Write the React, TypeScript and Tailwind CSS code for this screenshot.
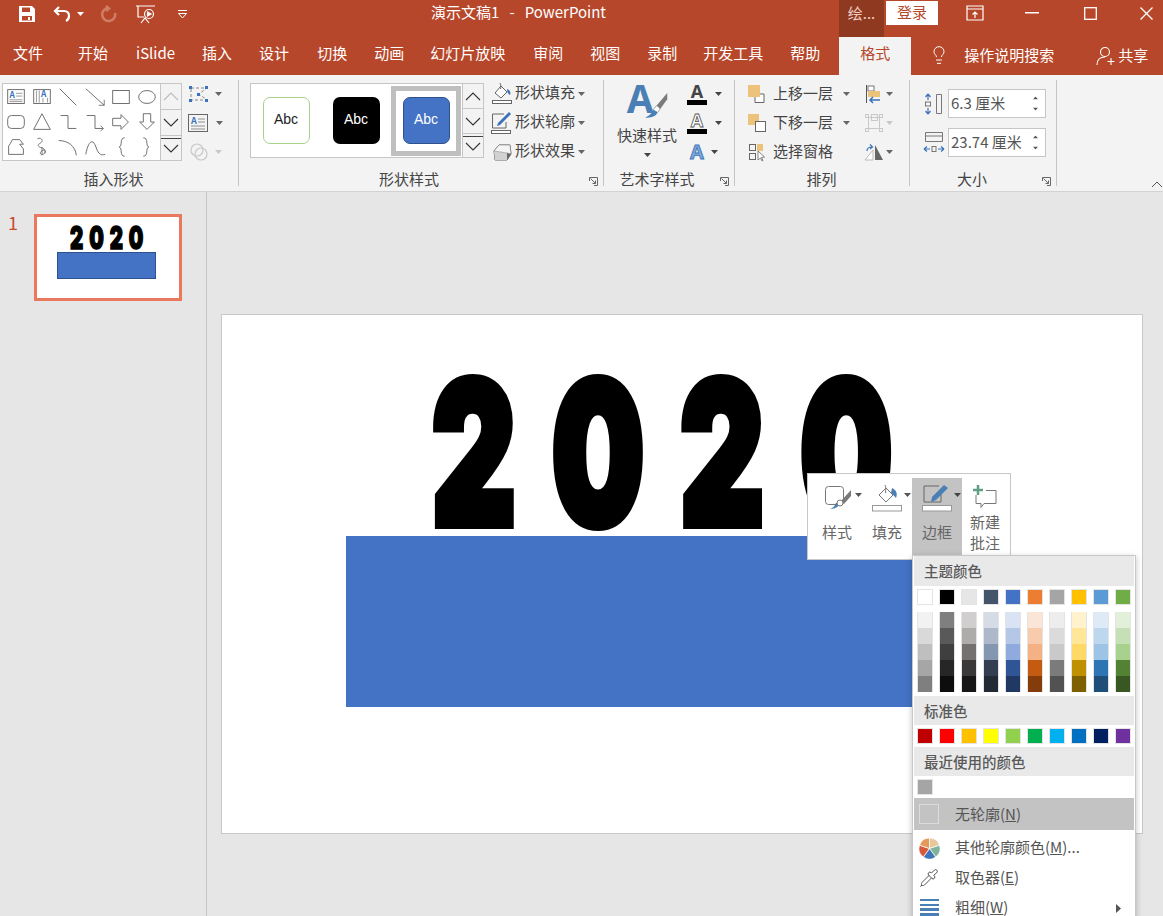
import type { ReactNode } from "react";
import { Lightbulb, Pipette } from "lucide-react";

const Caret = ({ className = "text-[#666]" }: { className?: string }) => (
  <svg width="7" height="4" viewBox="0 0 7 4" className={`shrink-0 ${className}`}>
    <path d="M0 0h7L3.5 4z" fill="currentColor" />
  </svg>
);

const Chevron = ({ up = false, muted = false }: { up?: boolean; muted?: boolean }) => (
  <svg width="16" height="9" viewBox="0 0 16 9" fill="none" stroke={muted ? "#bbb" : "#333"} strokeWidth="1.1">
    <path d={up ? "M1 8l7-7 7 7" : "M1 1l7 7 7-7"} />
  </svg>
);

const Launcher = ({ className }: { className: string }) => (
  <svg width="9" height="9" viewBox="0 0 9 9" fill="none" stroke="#666" className={`absolute ${className}`}>
    <path d="M.5 4V.5H8.500V8.500H5" />
    <path d="M1.500 1.500l5 5M6.500 3.500v3h-3" />
  </svg>
);

const Scroller = ({ first, muted }: { first: string; muted?: boolean }) => (
  <div className="flex w-[21px] flex-col border-l border-[#c6c6c6] bg-[#f3f3f3]">
    <div className={`flex items-center justify-center border-b border-[#c6c6c6] ${first}`}>
      <Chevron up muted={muted} />
    </div>
    <div className={`flex items-center justify-center border-b border-[#c6c6c6] ${first}`}>
      <Chevron />
    </div>
    <div className="flex flex-1 flex-col items-center gap-[5px] pt-[2px]">
      <div className="h-px w-full bg-[#444]" />
      <Chevron />
    </div>
  </div>
);

const shapePaths: ReactNode[] = [
  <g key="a"><rect x="4" y="5" width="18" height="15" /><text x="6" y="14" fontSize="9" fontWeight="700" fill="#3b73b9" stroke="none">A</text><path d="M13 9h7M13 12h7M6 16h14M6 18h14" strokeWidth=".7" /></g>,
  <g key="b"><rect x="4" y="5" width="18" height="15" /><path d="M7 6v13M10 6v13M19 14v5M14 14v5" strokeWidth=".7" /><text x="12" y="13" fontSize="9" fontWeight="700" fill="#3b73b9" stroke="none">A</text></g>,
  <path key="c" d="M4 4l18 18" />,
  <g key="d"><path d="M3 4l20 18" /><path d="M23 16v6h-6" strokeWidth=".9" /></g>,
  <rect key="e" x="4" y="6" width="18" height="14" />,
  <ellipse key="f" cx="13" cy="13" rx="9" ry="7" />,
  <rect key="g" x="4" y="6" width="18" height="14" rx="4" />,
  <path key="h" d="M13 4l9 17H4z" />,
  <path key="i" d="M5 6h8v14h9" />,
  <g key="j"><path d="M4 6h9v14h9" /><path d="M19 17l3 3-3 3" strokeWidth=".9" /></g>,
  <path key="k" d="M4 9h9V5l8 8-8 8v-4H4z" />,
  <path key="l" d="M9 4h8v9h4l-8 8-8-8h4z" />,
  <path key="m" d="M9 5h8l4 5h-4l4 5v6H5v-9l2-3z" />,
  <path key="n" d="M8 4c5-2 7 3 3 5s-2 4 2 5 4 6 1 7-4-2-1-4 5 0 3 3M13 13v9" strokeWidth=".9" />,
  <path key="o" d="M3 6c10 0 18 6 19 16" />,
  <path key="p" d="M3 21c3-16 8-17 11-8s6 9 10 8" />,
  <path key="q" d="M17 3c-6 0-2 9-6 10 4 1 0 10 6 10" />,
  <path key="r" d="M9 3c6 0 2 9 6 10-4 1 0 10-6 10" />,
];

const ShapeGallery = () => (
  <div className="flex h-[78px] w-[180px] border border-[#c6c6c6] bg-white">
    <div className="grid w-[158px] grid-cols-6 grid-rows-3">
      {shapePaths.map((p, i) => (
        <div key={i} className="flex items-center justify-center">
          <svg width="24" height="24" viewBox="0 0 26 26" fill="none" stroke="#666" strokeWidth="1">
            {p}
          </svg>
        </div>
      ))}
    </div>
    <Scroller first="h-[26px]" muted />
  </div>
);

const StyleGallery = () => (
  <div className="flex h-[75px] w-[234px] border border-[#c6c6c6] bg-white">
    <div className="flex w-[212px] items-center font-['Liberation_Sans',sans-serif] text-[14px]">
      <div className="flex h-[70px] w-[70px] items-center justify-center">
        <div className="flex h-[47px] w-[47px] items-center justify-center rounded-[7px] border-[1.500px] border-[#a9d18e] bg-white pb-[3px] text-[#222]">
          Abc
        </div>
      </div>
      <div className="flex h-[70px] w-[70px] items-center justify-center">
        <div className="flex h-[47px] w-[47px] items-center justify-center rounded-[7px] bg-black pb-[3px] text-white">
          Abc
        </div>
      </div>
      <div className="flex h-[70px] w-[70px] items-center justify-center border-[5px] border-[#bfbfbf]">
        <div className="flex h-[47px] w-[47px] items-center justify-center rounded-[7px] border border-[#2f528f] bg-[#4472c4] pb-[3px] text-white">
          Abc
        </div>
      </div>
    </div>
    <Scroller first="h-[25px]" />
  </div>
);

const IconFill = () => (
  <svg width="24" height="24" viewBox="0 0 24 24" fill="none" stroke="#666">
    <path d="M5 11l6-7 6 6-6 6z" fill="#fff" />
    <path d="M10 1c1 2 1 4 .5 6" />
    <path d="M17 7c3 1 4 3 3 6-2-1-3-3-3-6z" fill="#3b73b9" stroke="none" />
    <rect x="2.500" y="18.500" width="19" height="3" fill="#fff" />
  </svg>
);

const IconOutline = () => (
  <svg width="24" height="24" viewBox="0 0 24 24" fill="none" stroke="#666">
    <path d="M14 3H2.500v14H16v-6" />
    <path d="M7 15l1-3L19 1l2 2L10 14z" fill="#3b73b9" stroke="none" />
    <rect x="1.500" y="19.500" width="19" height="3" fill="#fff" />
  </svg>
);

const IconEffect = () => (
  <svg width="24" height="24" viewBox="0 0 24 24">
    <path d="M4 11l5-6h11l1 9-4 6H5z" fill="#fff" stroke="#666" />
    <path d="M5 20l-1-9 13 2v7z" fill="#d2d2d2" />
    <path d="M4 11l5-6h11l1 9-4-1z" fill="#f4f4f4" stroke="#777" strokeWidth=".5" />
    <path d="M17 13l4 1-4 6z" fill="#666" />
  </svg>
);

const WordArtA = () => (
  <svg width="44" height="38" viewBox="0 0 50 42">
    <text x="2" y="35" fontSize="44" fontWeight="700" fill="#4a7fb5" fontFamily="'Noto Sans', sans-serif">A</text>
    <path d="M48 12L36 26l4 4L48 19z" fill="#7a7a7a" />
    <path d="M36 26l4 4-3 4-5-3z" fill="#fff" stroke="#999" />
    <path d="M32 31l5 3c-2 5-8 6-14 6 3-2 7-3 9-9z" fill="#4a7fb5" />
  </svg>
);

const LetterIcon = ({ kind }: { kind: "fill" | "line" | "glow" }) => (
  <svg width="22" height="24" viewBox="0 0 22 24">
    {kind === "fill" && (
      <>
        <text x="11" y="16" textAnchor="middle" fontSize="18" fontWeight="700" fill="#444" fontFamily="'Noto Sans', sans-serif">A</text>
        <rect x="1" y="18" width="20" height="5" fill="#000" />
      </>
    )}
    {kind === "line" && (
      <>
        <text x="11" y="16" textAnchor="middle" fontSize="18" fontWeight="700" fill="#fff" stroke="#555" strokeWidth=".8" fontFamily="'Noto Sans', sans-serif">A</text>
        <rect x="1" y="18" width="20" height="5" fill="#000" />
      </>
    )}
    {kind === "glow" && (
      <text x="11" y="19" textAnchor="middle" fontSize="20" fontWeight="700" fill="#7ba7d8" stroke="#3b73b9" strokeWidth=".8" fontFamily="'Noto Sans', sans-serif">A</text>
    )}
  </svg>
);

const LayerIcon = ({ kind }: { kind: "up" | "down" | "pane" }) => (
  <svg width="22" height="22" viewBox="0 0 22 22" fill="none" stroke="#666">
    {kind === "up" && (
      <>
        <path d="M9 11v8.500h9V11z" fill="#fff" />
        <rect x="2" y="2" width="12" height="12" fill="#edc27a" stroke="none" />
      </>
    )}
    {kind === "down" && (
      <>
        <rect x="2" y="2" width="11" height="11" fill="#edc27a" stroke="none" />
        <rect x="9.500" y="9.500" width="10" height="10" fill="#fff" />
      </>
    )}
    {kind === "pane" && (
      <>
        <rect x="3.500" y="3.500" width="6" height="6" />
        <rect x="3.500" y="12.500" width="6" height="6" />
        <rect x="11" y="3" width="6" height="7" fill="#edc27a" stroke="none" />
        <path d="M12 10l0 9 2.500-2 1.500 3 1-.5-1.500-3 3-.5z" fill="#fff" strokeWidth=".8" />
      </>
    )}
  </svg>
);

const ArrangeIcon = ({ kind }: { kind: "align" | "group" | "rotate" }) => (
  <svg width="22" height="22" viewBox="0 0 22 22" fill="none" stroke="#777">
    {kind === "align" && (
      <>
        <path d="M3.500 2v18" stroke="#555" />
        <rect x="5" y="3" width="6" height="5" fill="#fff" />
        <rect x="5" y="8" width="12" height="6" fill="#edc27a" stroke="none" />
        <path d="M17 17H7M10 14l-3 3 3 3" stroke="#3b73b9" strokeWidth="1.500" />
      </>
    )}
    {kind === "group" && (
      <g stroke="#c8c8c8">
        <rect x="5.500" y="5.500" width="11" height="11" />
        <rect x="8.500" y="2.500" width="6" height="6" />
        <rect x="2.500" y="2.500" width="3" height="3" />
        <rect x="16.500" y="2.500" width="3" height="3" />
        <rect x="2.500" y="16.500" width="3" height="3" />
        <rect x="16.500" y="16.500" width="3" height="3" />
      </g>
    )}
    {kind === "rotate" && (
      <>
        <path d="M2 19h8V9z" stroke="#bbb" fill="#fff" />
        <path d="M12 4v15h8z" fill="#666" stroke="none" />
        <path d="M4 10c0-3 2-4 5-4M7 3.500L9.500 6 7 8" stroke="#3b73b9" strokeWidth="1.200" />
      </>
    )}
  </svg>
);

const SizeIcon = ({ wide = false }: { wide?: boolean }) => (
  <svg width="24" height="24" viewBox="0 0 24 24" fill="none" stroke="#777">
    {wide ? (
      <>
        <path d="M3.500 1.500h17v9h-17zM3.500 5h17" />
        <path d="M2 18h6M16 18h6M2 18l3-2.500M2 18l3 2.500M22 18l-3-2.500M22 18l-3 2.500" stroke="#3b73b9" strokeWidth="1.200" />
        <rect x="10" y="15.500" width="4" height="5" />
      </>
    ) : (
      <>
        <path d="M14.500 2.500h5v19h-5z" />
        <path d="M6 2v6M6 16v6M6 2L3.500 5M6 2l2.500 3M6 22l-2.500-3M6 22l2.500-3" stroke="#3b73b9" strokeWidth="1.200" />
        <rect x="3.500" y="10" width="5" height="4" />
      </>
    )}
  </svg>
);

const Command = ({ icon, label }: { icon: ReactNode; label: string }) => (
  <div className="flex h-[29px] items-center">
    <span className="flex w-[24px] items-center justify-center">{icon}</span>
    <span className="ml-[1px] w-[60px] whitespace-nowrap pb-[2px] text-[15px]">{label}</span>
    <Caret className="ml-[3px] text-[#666]" />
  </div>
);

const SizeField = ({ value, wide }: { value: string; wide?: boolean }) => (
  <div className="flex items-center">
    <span className="flex w-[24px] items-center justify-center">
      <SizeIcon wide={wide} />
    </span>
    <div className="ml-[2px] flex h-[29px] w-[98px] items-center justify-between border border-[#c6c6c6] bg-white pl-[2px] pr-[6px]">
      <span className="text-[15px] text-[#555]">{value}</span>
      <span className="flex flex-col gap-[7px]">
        <Caret className="rotate-180 scale-75 text-[#555]" />
        <Caret className="scale-75 text-[#555]" />
      </span>
    </div>
  </div>
);

const Sep = () => <div className="my-[5px] w-px shrink-0 bg-[#c6c6c6]" />;

const GroupLabel = ({ children }: { children: ReactNode }) => (
  <div className="flex h-[22px] items-center justify-center pb-[1px] text-[15px] text-[#444]">{children}</div>
);

const tabs = [
  { label: "文件", cls: "ml-[13px]" },
  { label: "开始", cls: "ml-[35px]" },
  { label: "iSlide", cls: "ml-[28px]" },
  { label: "插入", cls: "ml-[27px]" },
  { label: "设计", cls: "ml-[27px]" },
  { label: "切换", cls: "ml-[28px]" },
  { label: "动画", cls: "ml-[27px]" },
  { label: "幻灯片放映", cls: "ml-[26px]" },
  { label: "审阅", cls: "ml-[28px]" },
  { label: "视图", cls: "ml-[27px]" },
  { label: "录制", cls: "ml-[27px]" },
  { label: "开发工具", cls: "ml-[26px]" },
  { label: "帮助", cls: "ml-[27px]" },
];

const TitleBar = () => (
  <div className="relative flex h-[37px] items-start bg-[#b7472a] text-white">
    <div className="flex h-[28px] items-center">
      <svg width="18" height="18" viewBox="0 0 18 18" className="ml-[18px]" fill="#fff">
        <path d="M1 1h13l3 3v13H1zm3 1.500V7h8V2.500zM4 11v4.500h10V11zm6 1h2v3h-2z" fillRule="evenodd" />
      </svg>
      <svg width="20" height="16" viewBox="0 0 20 16" className="ml-[17px]" fill="none" stroke="#fff" strokeWidth="2.200">
        <path d="M6 1L2 5l4 4M2 5h9c4 0 5 3 5 5s-1 4-3 5" />
      </svg>
      <Caret className="ml-[4px] text-white" />
      <svg width="18" height="18" viewBox="0 0 18 18" className="ml-[17px]" fill="none" stroke="#cf7c64" strokeWidth="2.600">
        <path d="M8 3a6.500 6.500 0 1 0 6 5M5 1l3 2.500L5 6" />
      </svg>
      <svg width="22" height="20" viewBox="0 0 22 20" className="ml-[16px]" fill="none" stroke="#fff" strokeWidth="1.200">
        <path d="M1 2h19M3 2v11h6M6 19l4-5 4 5" />
        <circle cx="14" cy="10" r="4.500" />
        <path d="M12.500 8v4l3.500-2z" fill="#fff" />
      </svg>
      <svg width="11" height="9" viewBox="0 0 11 9" className="ml-[20px]" fill="none" stroke="#fff">
        <path d="M1 .5h9M1.500 3.500h8L5.500 8z" />
      </svg>
    </div>
    <div className="absolute left-[431px] top-[2px] whitespace-pre text-[15px] leading-[20px]">演示文稿1   -   PowerPoint</div>
    <div className="ml-auto flex items-start pr-px">
      <div className="flex h-[37px] w-[45px] items-start justify-center bg-[#8f3a20] pt-[2px] text-[15px] text-[#f0cfc5]">绘...</div>
      <div className="ml-[2px] mt-px flex h-[24px] w-[52px] items-center justify-center bg-white pb-[2px] text-[15px] text-[#b7472a]">登录</div>
      <div className="flex h-[26px] w-[76px] items-center justify-center">
        <svg width="18" height="16" viewBox="0 0 18 16" fill="none" stroke="#fff" strokeWidth="1.200" className="-ml-[3px]">
          <path d="M1 1h16v14H1zM1 4h16M9 13V7M6.500 9.500L9 7l2.500 2.500" />
        </svg>
      </div>
      <div className="flex h-[26px] w-[36px] items-center justify-center">
        <svg width="14" height="2" viewBox="0 0 14 2" fill="#fff">
          <rect width="14" height="1.500" />
        </svg>
      </div>
      <div className="ml-[21px] flex h-[26px] w-[38px] items-center justify-center">
        <svg width="13" height="13" viewBox="0 0 13 13" fill="none" stroke="#fff" strokeWidth="1.300">
          <rect x=".7" y=".7" width="11.600" height="11.600" />
        </svg>
      </div>
      <div className="ml-[21px] flex h-[26px] w-[32px] items-center justify-center">
        <svg width="13" height="13" viewBox="0 0 13 13" fill="none" stroke="#fff" strokeWidth="1.300">
          <path d="M.5.5l12 12M12.500.5l-12 12" />
        </svg>
      </div>
    </div>
  </div>
);

const TabRow = () => (
  <div className="flex h-[38px] items-center bg-[#b7472a] text-[15px] text-white">
    {tabs.map((t) => (
      <span key={t.label} className={`whitespace-nowrap pb-[5px] ${t.cls}`}>
        {t.label}
      </span>
    ))}
    <div className="ml-[19px] flex h-full w-[72px] items-center justify-center bg-[#f3f3f3] pb-[5px] text-[#b7472a]">格式</div>
    <Lightbulb size={20} strokeWidth={1.200} className="mb-[3px] ml-[18px]" />
    <span className="ml-[15px] whitespace-nowrap pb-[2px]">操作说明搜索</span>
    <svg width="20" height="20" viewBox="0 0 20 20" fill="none" stroke="#fff" className="ml-[42px]" strokeWidth="1.100">
      <circle cx="9" cy="6" r="4.500" />
      <path d="M1 19c0-5 3-8 8-8M15 12v7M11.500 15.500h7" />
    </svg>
    <span className="ml-[2px] whitespace-nowrap pb-[2px]">共享</span>
  </div>
);

const Ribbon = () => (
  <div className="relative flex h-[117px] border-b border-[#d2d2d2] bg-[#f3f3f3] text-[#444]">
    {/* 插入形状 */}
    <div className="flex w-[238px] shrink-0 flex-col">
      <div className="flex h-[95px] pl-[2px] pt-[8px]">
        <ShapeGallery />
        <div className="-mt-[4px] ml-[6px] flex flex-col">
          <div className="flex h-[29px] items-center gap-[5px]">
            <svg width="22" height="20" viewBox="0 0 22 20" fill="none" stroke="#888" strokeDasharray="3 2">
              <path d="M3 4h16l-8 6 8 6H3z" />
              <g fill="#3b73b9" stroke="none" strokeDasharray="0">
                <rect x="1" y="2" width="3" height="3" /><rect x="17" y="2" width="3" height="3" /><rect x="9" y="9" width="3" height="3" /><rect x="1" y="15" width="3" height="3" /><rect x="17" y="15" width="3" height="3" />
              </g>
            </svg>
            <Caret />
          </div>
          <div className="flex h-[29px] items-center gap-[8px]">
            <svg width="20" height="18" viewBox="0 0 20 18" fill="none" stroke="#666">
              <rect x=".5" y=".5" width="19" height="17" />
              <text x="3" y="10" fontSize="9" fontWeight="700" fill="#3b73b9" stroke="none">A</text>
              <path d="M10 5h7M10 8h7M3 12h14M3 15h14" strokeWidth=".7" />
            </svg>
            <Caret />
          </div>
          <div className="flex h-[29px] items-center gap-[6px]">
            <svg width="20" height="18" viewBox="0 0 20 18" fill="none" stroke="#c8c8c8" strokeWidth="1.200" className="ml-[1px]">
              <circle cx="8" cy="7" r="6" /><circle cx="12" cy="11" r="6" />
            </svg>
            <Caret className="text-[#c8c8c8]" />
          </div>
        </div>
      </div>
      <GroupLabel>
        <span className="-ml-[11px]">插入形状</span>
      </GroupLabel>
    </div>
    <Sep />
    {/* 形状样式 */}
    <div className="relative flex w-[364px] shrink-0 flex-col">
      <div className="flex h-[95px] pl-[11px] pt-[8px]">
        <StyleGallery />
        <div className="-mt-[4px] ml-[6px] flex flex-col">
          <Command icon={<IconFill />} label="形状填充" />
          <Command icon={<IconOutline />} label="形状轮廓" />
          <Command icon={<IconEffect />} label="形状效果" />
        </div>
      </div>
      <GroupLabel>
        <span className="-ml-[24px]">形状样式</span>
      </GroupLabel>
      <Launcher className="bottom-[5px] right-[5px]" />
    </div>
    <Sep />
    {/* 艺术字样式 */}
    <div className="relative flex w-[130px] shrink-0 flex-col">
      <div className="flex h-[95px]">
        <div className="ml-[4px] flex w-[78px] flex-col items-center pt-[7px]">
          <WordArtA />
          <span className="mt-[4px] whitespace-nowrap text-[15px] leading-[22px]">快速样式</span>
          <Caret className="mt-[7px]" />
        </div>
        <div className="flex flex-col pt-[4px]">
          <div className="flex h-[29px] items-center">
            <LetterIcon kind="fill" />
            <Caret className="ml-[7px]" />
          </div>
          <div className="flex h-[29px] items-center">
            <LetterIcon kind="line" />
            <Caret className="ml-[7px]" />
          </div>
          <div className="flex h-[29px] items-center">
            <LetterIcon kind="glow" />
            <Caret className="ml-[3px]" />
          </div>
        </div>
      </div>
      <GroupLabel>
        <span className="ml-[-24px]">艺术字样式</span>
      </GroupLabel>
      <Launcher className="bottom-[5px] right-[5px]" />
    </div>
    <Sep />
    {/* 排列 */}
    <div className="flex w-[174px] shrink-0 flex-col">
      <div className="flex h-[95px] flex-col pl-[11px] pt-[4px]">
        {[
          { icon: <LayerIcon kind="up" />, label: "上移一层", side: <ArrangeIcon kind="align" />, on: true },
          { icon: <LayerIcon kind="down" />, label: "下移一层", side: <ArrangeIcon kind="group" />, on: false },
          { icon: <LayerIcon kind="pane" />, label: "选择窗格", side: <ArrangeIcon kind="rotate" />, on: true },
        ].map((r) => (
          <div key={r.label} className="flex h-[29px] items-center">
            {r.icon}
            <span className="ml-[5px] w-[60px] whitespace-nowrap pb-[1px] text-[15px]">{r.label}</span>
            <span className="flex w-[17px] justify-end">{r.label !== "选择窗格" && <Caret />}</span>
            <span className="ml-[13px]">{r.side}</span>
            <Caret className={`ml-[1px] ${r.on ? "text-[#666]" : "text-[#c8c8c8]"}`} />
          </div>
        ))}
      </div>
      <GroupLabel>
        <span className="ml-[-1px]">排列</span>
      </GroupLabel>
    </div>
    <Sep />
    {/* 大小 */}
    <div className="relative flex w-[146px] shrink-0 flex-col">
      <div className="flex h-[95px] flex-col gap-[10px] pl-[12px] pt-[14px]">
        <SizeField value="6.3 厘米" />
        <SizeField value="23.74 厘米" wide />
      </div>
      <GroupLabel>
        <span className="-ml-[22px]">大小</span>
      </GroupLabel>
      <Launcher className="bottom-[5px] right-[5px]" />
    </div>
    <Sep />
    <svg width="12" height="7" viewBox="0 0 12 7" fill="none" stroke="#555" className="absolute bottom-[3px] right-[0px]">
      <path d="M1 6l5-5 5 5" />
    </svg>
  </div>
);

const Thumbnail = () => (
  <div className="relative h-[87px] w-[148px] overflow-hidden border-[3px] border-[#e9785d] bg-white">
    <div className="absolute left-[33px] top-[2px] origin-left scale-x-[.66] whitespace-nowrap font-['Inter',sans-serif] text-[31px] font-black leading-[38px] tracking-[9px] text-black [-webkit-text-stroke:1.600px_black]">
      2020
    </div>
    <div className="absolute left-[20px] top-[35px] h-[27px] w-[99px] border border-[#2f528f] bg-[#4472c4]" />
  </div>
);

const SlideCanvas = () => (
  <div className="relative h-[520px] w-[922px] overflow-hidden border border-[#c8c8c8] bg-white">
    <div className="absolute left-[210px] top-[13px] origin-left scale-x-[.66] whitespace-nowrap font-['Inter',sans-serif] text-[196px] font-black leading-[250px] tracking-[55px] text-black [-webkit-text-stroke:10px_black]">
      2020
    </div>
    <div className="absolute left-[124px] top-[221px] h-[171px] w-[644px] bg-[#4472c4]" />
  </div>
);

const MiniToolbar = () => (
  <div className="absolute left-[807px] top-[473px] flex h-[87px] w-[204px] border border-[#c8c8c8] bg-white pl-[4px] pt-[4px] text-[15px] leading-[21px] text-[#666]">
    <div className="flex h-[77px] w-[50px] flex-col items-center pt-[6px]">
      <div className="ml-[10px] flex h-[28px] items-center">
        <svg width="30" height="26" viewBox="0 0 30 26" fill="none" stroke="#777" className="ml-[2px]">
          <rect x="1.500" y="1.500" width="18" height="18" rx="3" />
          <path d="M27 5L17 16l3 3 7-8z" fill="#7a7a7a" stroke="none" />
          <path d="M15 17c1 4-3 7-9 7 3-1 5-3 6-6z" fill="#4a7fb5" stroke="none" />
          <circle cx="16" cy="18" r="3" fill="#fff" />
        </svg>
        <Caret className="-mt-[6px] ml-[1px] text-[#555]" />
      </div>
      <span className="mt-[9px]">样式</span>
    </div>
    <div className="flex h-[77px] w-[50px] flex-col items-center pt-[6px]">
      <div className="ml-[6px] flex h-[28px] items-center">
        <svg width="32" height="28" viewBox="0 0 32 28" fill="none" stroke="#777" className="ml-[2px]">
          <path d="M8 11l7-7 7 7-7 7z" fill="#fff" />
          <path d="M14 1c1 2 1 4 .5 8" />
          <path d="M21 4c4 2 6 5 4 10-2-2-3-4-5-5z" fill="#4a7fb5" stroke="none" />
          <rect x="1.500" y="21.500" width="29" height="5.500" fill="#fff" stroke="#999" />
        </svg>
        <Caret className="-mt-[6px] ml-[1px] text-[#555]" />
      </div>
      <span className="mt-[9px]">填充</span>
    </div>
    <div className="flex h-[77px] w-[50px] flex-col items-center bg-[#c3c3c3] pt-[6px]">
      <div className="ml-[6px] flex h-[28px] items-center">
        <svg width="32" height="28" viewBox="0 0 32 28" fill="none" stroke="#666" className="ml-[2px]">
          <path d="M18 2H3v16h17v-8" />
          <path d="M10 18l1-5L23 1l4 3-12 12z" fill="#4a7fb5" stroke="none" />
          <rect x="1.500" y="21.500" width="29" height="5.500" fill="#fff" stroke="#999" />
        </svg>
        <Caret className="-mt-[6px] ml-[1px] text-[#444]" />
      </div>
      <span className="mt-[9px]">边框</span>
    </div>
    <div className="flex w-[46px] flex-col items-center pt-[6px]">
      <svg width="26" height="24" viewBox="0 0 26 24" fill="none" stroke="#777">
        <path d="M3 6.500h3M14 6.500h10v13H12l-3 4v-4H4V11" />
        <path d="M6 1v10M1 6h10" stroke="#5f9f85" strokeWidth="2.500" />
      </svg>
      <span className="mt-[3px]">新建</span>
      <span>批注</span>
    </div>
  </div>
);

const themeRow = ["bg-white", "bg-black", "bg-[#e7e6e6]", "bg-[#44546a]", "bg-[#4472c4]", "bg-[#ed7d31]", "bg-[#a5a5a5]", "bg-[#ffc000]", "bg-[#5b9bd5]", "bg-[#70ad47]"];

const shades = [
  ["bg-[#f2f2f2]", "bg-[#d9d9d9]", "bg-[#bfbfbf]", "bg-[#a6a6a6]", "bg-[#7f7f7f]"],
  ["bg-[#7f7f7f]", "bg-[#595959]", "bg-[#3f3f3f]", "bg-[#262626]", "bg-[#0d0d0d]"],
  ["bg-[#d0cece]", "bg-[#aeabab]", "bg-[#757070]", "bg-[#3a3838]", "bg-[#171616]"],
  ["bg-[#d6dce5]", "bg-[#adb9ca]", "bg-[#8497b0]", "bg-[#333f50]", "bg-[#222a35]"],
  ["bg-[#dae3f3]", "bg-[#b4c7e7]", "bg-[#8faadc]", "bg-[#2f5597]", "bg-[#203864]"],
  ["bg-[#fbe5d6]", "bg-[#f8cbad]", "bg-[#f4b183]", "bg-[#c55a11]", "bg-[#843c0c]"],
  ["bg-[#ededed]", "bg-[#dbdbdb]", "bg-[#c9c9c9]", "bg-[#7b7b7b]", "bg-[#525252]"],
  ["bg-[#fff2cc]", "bg-[#ffe699]", "bg-[#ffd966]", "bg-[#bf9000]", "bg-[#7f6000]"],
  ["bg-[#deebf7]", "bg-[#bdd7ee]", "bg-[#9dc3e6]", "bg-[#2e75b6]", "bg-[#1f4e79]"],
  ["bg-[#e2f0d9]", "bg-[#c5e0b4]", "bg-[#a9d18e]", "bg-[#548235]", "bg-[#385723]"],
];

const standardRow = ["bg-[#c00000]", "bg-[#ff0000]", "bg-[#ffc000]", "bg-[#ffff00]", "bg-[#92d050]", "bg-[#00b050]", "bg-[#00b0f0]", "bg-[#0070c0]", "bg-[#002060]", "bg-[#7030a0]"];

const Swatch = ({ color }: { color: string }) => (
  <div className={`h-[16px] w-[16px] border border-[#e4e4e4] ${color}`} />
);

const MenuHeader = ({ children, h }: { children: ReactNode; h: string }) => (
  <div className={`flex items-center bg-[#e9e9e9] pl-[10px] text-[14.500px] font-medium text-[#595959] ${h}`}>{children}</div>
);

const MenuItem = ({ icon, label, hot, rest = "", active, arrow }: { icon: ReactNode; label: string; hot: string; rest?: string; active?: boolean; arrow?: boolean }) => (
  <div className={`flex items-center text-[15px] text-[#555] ${active ? "h-[32px] bg-[#c3c3c3]" : "h-[30px]"}`}>
    <span className="flex w-[41px] shrink-0 items-center justify-center pr-[11px]">{icon}</span>
    <span className={`whitespace-nowrap ${active ? "" : "pb-[2px]"}`}>
      {label}(<span className="underline">{hot}</span>){rest}
    </span>
    {arrow && (
      <svg width="5" height="9" viewBox="0 0 5 9" className="ml-auto mr-[13px]">
        <path d="M0 0l5 4.500L0 9z" fill="#555" />
      </svg>
    )}
  </div>
);

const ColorMenu = () => (
  <div className="absolute left-[912px] top-[555px] h-[380px] w-[224px] border border-[#c8c8c8] bg-white px-px shadow-[0_2px_6px_rgba(0,0,0,0.25)]">
    <MenuHeader h="h-[30px]">主题颜色</MenuHeader>
    <div className="flex gap-[6px] pl-[3px] pt-[3px]">
      {themeRow.map((c) => (
        <Swatch key={c} color={c} />
      ))}
    </div>
    <div className="flex gap-[6px] pl-[3px] pt-[7px]">
      {shades.map((col, i) => (
        <div key={i} className="flex w-[16px] flex-col border-x border-[#e4e4e4]">
          {col.map((c) => (
            <div key={c} className={`h-[16px] ${c}`} />
          ))}
        </div>
      ))}
    </div>
    <div className="mt-[4px]">
      <MenuHeader h="h-[29px]">标准色</MenuHeader>
    </div>
    <div className="flex gap-[6px] pl-[3px] pt-[3px]">
      {standardRow.map((c) => (
        <Swatch key={c} color={c} />
      ))}
    </div>
    <div className="mt-[3px]">
      <MenuHeader h="h-[29px]">最近使用的颜色</MenuHeader>
    </div>
    <div className="pl-[3px] pt-[3px]">
      <Swatch color="bg-[#a5a5a5]" />
    </div>
    <div className="mt-[3px]">
      <MenuItem active icon={<div className="h-[20px] w-[20px] shrink-0 border border-[#dcdcdc]" />} label="无轮廓" hot="N" />
    </div>
    <div className="mt-[3px]">
      <MenuItem
        icon={
          <svg width="21" height="21" viewBox="0 0 20 20" className="shrink-0">
            <g stroke="#fff" strokeWidth=".7">
              <path d="M10 10V0a10 10 0 0 1 9.500 6.900z" fill="#e8c79a" />
              <path d="M10 10l9.500-3.100a10 10 0 0 1-3.600 11.200z" fill="#7fb39a" />
              <path d="M10 10l5.900 8.100a10 10 0 0 1-11.800 0z" fill="#3f76b8" />
              <path d="M10 10l-5.900 8.100A10 10 0 0 1 .5 6.900z" fill="#d55a3a" />
              <path d="M10 10L.5 6.900A10 10 0 0 1 10 0z" fill="#e39a5a" />
            </g>
          </svg>
        }
        label="其他轮廓颜色"
        hot="M"
        rest="..."
      />
      <MenuItem icon={<Pipette size={20} strokeWidth={1.200} className="shrink-0 text-[#555]" />} label="取色器" hot="E" />
      <MenuItem
        icon={
          <svg width="19" height="17" viewBox="0 0 19 17" fill="#4a7fb5" className="mb-[2px] shrink-0">
            <rect y="0" width="19" height="2" /><rect y="5" width="19" height="2" /><rect y="9" width="19" height="3" /><rect y="14" width="19" height="3" />
          </svg>
        }
        label="粗细"
        hot="W"
        arrow
      />
    </div>
  </div>
);

export default function App() {
  return (
    <div className="relative flex h-[916px] w-[1163px] flex-col overflow-hidden bg-[#e6e6e6] font-['Noto_Sans_CJK_SC','Noto_Sans',sans-serif]">
      <TitleBar />
      <TabRow />
      <Ribbon />
      <div className="flex flex-1">
        {/* thumbnails */}
        <div className="flex w-[207px] shrink-0 border-r border-[#c6c6c6] pl-[8px] pt-[22px]">
          <span className="-mt-[2px] w-[26px] text-[18px] leading-[20px] text-[#c8482c]">1</span>
          <Thumbnail />
        </div>
        <div className="pl-[14px] pt-[122px]">
          <SlideCanvas />
        </div>
      </div>
      <MiniToolbar />
      <ColorMenu />
    </div>
  );
}
